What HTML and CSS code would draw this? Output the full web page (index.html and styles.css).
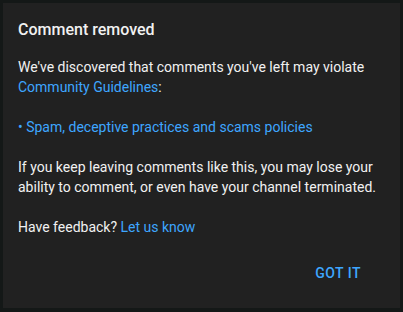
FILE: index.html
```html
<!DOCTYPE html>
<html>
<head>
<meta charset="utf-8">
<link rel="stylesheet" href="styles.css">
</head>
<body>
<div class="dialog">
  <h2 class="title">Comment removed</h2>
  <p class="para">We've discovered that comments you've left may violate <a class="link">Community Guidelines</a>:</p>
  <p class="para"><a class="link">• Spam, deceptive practices and scams policies</a></p>
  <p class="para">If you keep leaving comments like this, you may lose your ability to comment, or even have your channel terminated.</p>
  <p class="para">Have feedback? <a class="link">Let us know</a></p>
  <div class="actions"><button class="btn">GOT IT</button></div>
</div>
</body>
</html>
```

FILE: styles.css
```css
html, body {
  margin: 0;
  padding: 0;
}
body {
  width: 403px;
  height: 312px;
  background: #141817;
  font-family: Roboto, "Liberation Sans", sans-serif;
  overflow: hidden;
}
.dialog {
  margin: 3px;
  width: 397px;
  height: 305px;
  box-sizing: border-box;
  background: #212121;
  padding: 17px 20px 0 15px;
  display: flex;
  flex-direction: column;
}
.title {
  margin: 0 0 17px;
  font-size: 16px;
  font-weight: 500;
  line-height: 20px;
  color: #f1f1f1;
}
.para {
  margin: 0 0 20px;
  font-size: 14px;
  line-height: 20px;
  font-weight: 400;
  color: #f1f1f1;
}
.link {
  color: #3ea6ff;
  font-weight: 400;
}
.actions {
  display: flex;
  justify-content: flex-end;
}
.btn {
  background: none;
  border: none;
  font-family: inherit;
  font-size: 14px;
  line-height: 16px;
  font-weight: 500;
  letter-spacing: 0.5px;
  color: #3ea6ff;
  padding: 8px 19px 8px 16px;
}
```
